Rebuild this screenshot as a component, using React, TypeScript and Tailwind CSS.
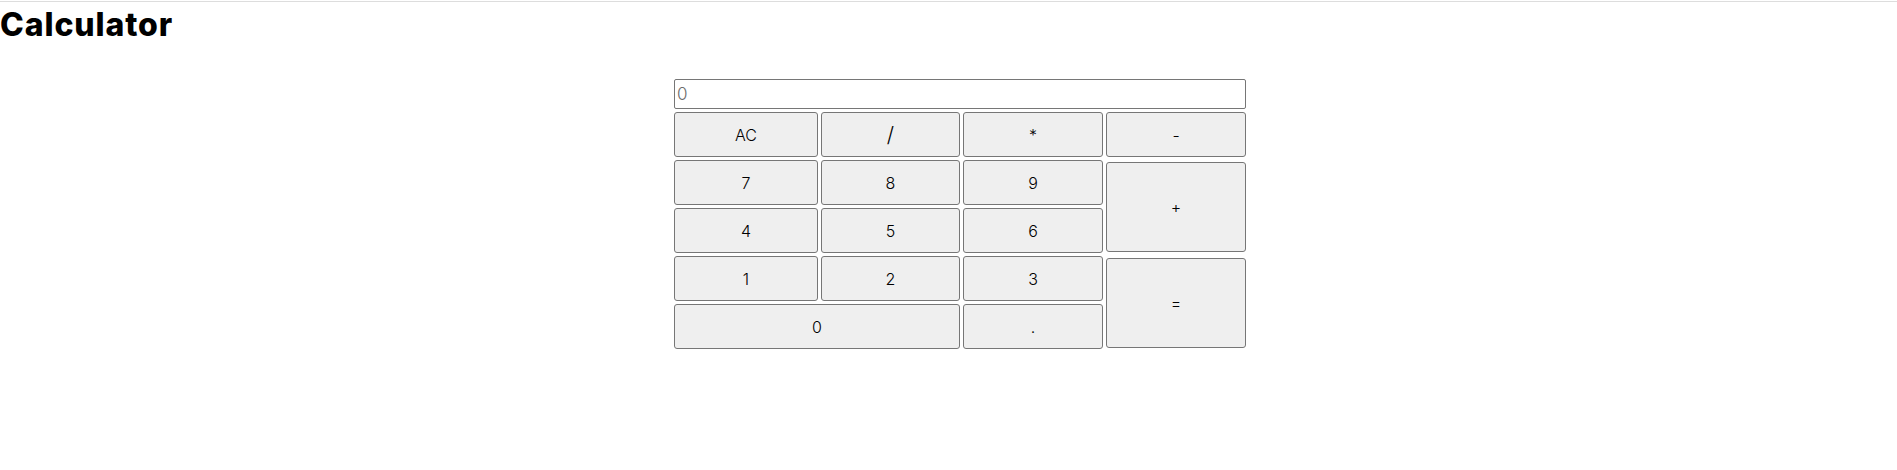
import React from "react";

const btn =
  "flex items-center justify-center bg-[#efefef] border border-[#767676] rounded-[3px] text-[16px] font-light text-black font-['Inter',sans-serif]";

export default function App() {
  return (
    <div className="min-h-screen bg-white font-['Inter',sans-serif]">
      <div className="h-px mt-px bg-[#dddddd]" />
      <h1 className="text-[32px] font-extrabold leading-[40px] mt-[3px] text-black tracking-[0.9px]">
        Calculator
      </h1>
      <div className="ml-[674px] mt-[34px] w-[572px]">
        <input
          className="block w-full h-[30px] border border-[#767676] rounded-[2px] px-[2px] text-[17px] font-light placeholder:text-[#6b6b6b] outline-none"
          placeholder="0"
          readOnly
        />
        <div className="mt-[3px] grid grid-cols-[144px_139px_140px_140px] grid-rows-[repeat(5,45px)] gap-[3px]">
          <button className={btn}>AC</button>
          <button className={btn + " text-[21px]"}>/</button>
          <button className={btn}>*</button>
          <button className={btn}>-</button>
          <button className={btn}>7</button>
          <button className={btn}>8</button>
          <button className={btn}>9</button>
          <button className={btn + " row-span-2 self-center h-[90px]"}>+</button>
          <button className={btn}>4</button>
          <button className={btn}>5</button>
          <button className={btn}>6</button>
          <button className={btn}>1</button>
          <button className={btn}>2</button>
          <button className={btn}>3</button>
          <button className={btn + " row-span-2 self-center h-[90px]"}>=</button>
          <button className={btn + " col-span-2"}>0</button>
          <button className={btn}>.</button>
        </div>
      </div>
    </div>
  );
}
